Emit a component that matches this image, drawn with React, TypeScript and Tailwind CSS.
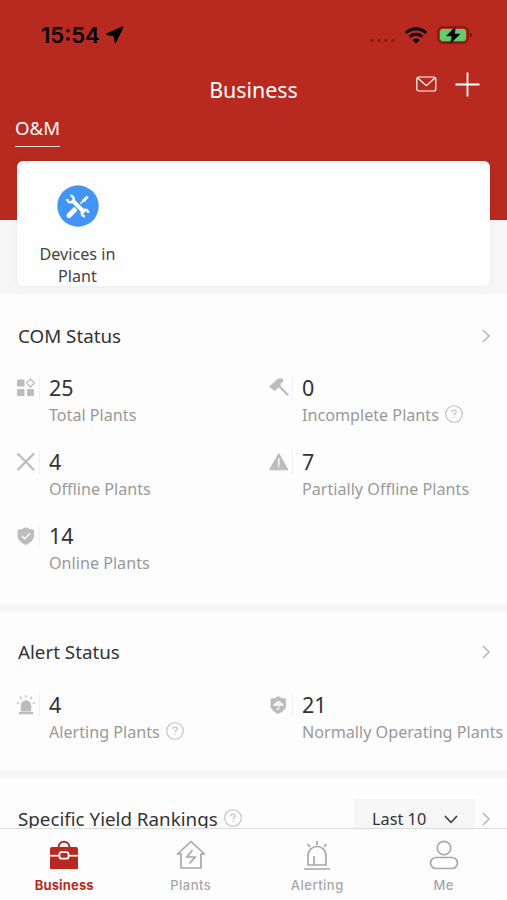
import type { ReactNode } from "react";

function Chevron() {
  return (
    <svg width="8" height="14" viewBox="0 0 8 14" fill="none" stroke="#b0b0b0" strokeWidth="1.4">
      <path d="M1 1l6 6-6 6" />
    </svg>
  );
}

function Help() {
  return (
    <svg className="-mt-0.5" width="18" height="18" viewBox="0 0 18 18" fill="none" stroke="#bdbdbd" strokeWidth="1.1">
      <circle cx="9" cy="9" r="8.3" />
      <path d="M6.9 7.2c0-2.9 4.3-2.8 4.3-.2 0 1.5-2.1 1.6-2.1 3.3M9.1 11.7v1.2" />
    </svg>
  );
}

function GridIcon() {
  return (
    <svg width="20" height="20" viewBox="0 0 20 20" fill="#bcbcbc">
      <rect x="1" y="1.5" width="7.5" height="7" rx="1" />
      <rect x="1" y="11" width="7.5" height="7" rx="1" />
      <rect x="11" y="11" width="7" height="7" rx="1" />
      <path d="M14.5 1l4 4-4 4-4-4z" fill="none" stroke="#bcbcbc" strokeWidth="1.3" strokeLinejoin="round" />
    </svg>
  );
}

function HammerIcon() {
  return (
    <svg width="20" height="20" viewBox="0 0 20 20">
      <path d="M.6 8.8L8.5 1.4Q10.5.2 13.6 1.2l.4 2-2.4 1.5-.6 2.8-5.200 5z" fill="#bcbcbc" stroke="#bcbcbc" strokeWidth="1" strokeLinejoin="round" />
      <path d="M10 8l8.600 8.800" stroke="#bcbcbc" strokeWidth="2.200" strokeLinecap="round" />
    </svg>
  );
}

function CrossIcon() {
  return (
    <svg width="20" height="20" viewBox="0 0 20 20" stroke="#bcbcbc" strokeWidth="2.3" strokeLinecap="round">
      <path d="M2 2l15.500 15.500M17.500 2L2 17.500" />
    </svg>
  );
}

function WarnIcon() {
  return (
    <svg width="20" height="20" viewBox="0 0 20 20">
      <path d="M9.800 1.500l9.200 16.300H.6z" fill="#bcbcbc" stroke="#bcbcbc" strokeWidth="1" strokeLinejoin="round" />
      <path d="M9.800 6.500v6.500M9.800 13.700v1.600" stroke="#fff" strokeWidth="1.400" />
    </svg>
  );
}

function ShieldCheckIcon() {
  return (
    <svg width="20" height="20" viewBox="0 0 20 20">
      <path d="M9.800 1.300Q13 3.500 18 3.700V10c0 4-3.800 7-8.200 9-4.400-2-8.200-5-8.200-9V3.700Q6.600 3.500 9.800 1.300z" fill="#bcbcbc" />
      <path d="M5.700 9.800l3.100 3 5.300-5.600" fill="none" stroke="#fff" strokeWidth="1.300" />
    </svg>
  );
}

function ShieldCloudIcon() {
  return (
    <svg width="20" height="20" viewBox="0 0 20 20">
      <path d="M9.300 1.200Q12.500 3.300 17 3.700V11c0 3.500-3.700 6-7.700 8-4-2-7.700-4.500-7.700-8V3.700Q6 3.300 9.300 1.200z" fill="#bcbcbc" />
      <path d="M4.300 11c0-2.100 1.300-3 2.300-3 .4-2.300 4.900-2.700 5.600 0 1.600 0 2.500 1.200 2.500 3z" fill="#f4f4f4" />
      <path d="M9.800 11v2.500c0 1.600-2.200 1.400-2.200.2" fill="none" stroke="#f4f4f4" strokeWidth="1.200" />
    </svg>
  );
}

function SirenIcon() {
  return (
    <svg width="20" height="20" viewBox="0 0 20 20">
      <path d="M4.800 16.500V10.500a5.200 5.200 0 0 1 10.400 0v6zM3 17h14v2.300H3z" fill="#bcbcbc" />
      <path d="M10 .3v2.500M4 1.700l1.600 2.400M16 1.700l-1.600 2.400M.7 7.500l2.700 1M19.300 7.500l-2.700 1" stroke="#bcbcbc" strokeWidth="1.300" />
    </svg>
  );
}

type MetricProps = { icon: ReactNode; value: number; label: string; help?: boolean };

function Metric({ icon, value, label, help }: MetricProps) {
  return (
    <div className="flex h-[74px] pl-4">
      <div className="flex h-6 w-6 shrink-0 items-center border-r border-[#f0f0f0]">{icon}</div>
      <div className="ml-[9px] whitespace-nowrap">
        <div className="h-6 text-[21.5px] leading-[23px] text-[#333]">{value}</div>
        <div className="mt-[3px] flex h-6 items-center gap-[6px] text-[16.15px] leading-6 text-[#999]">
          {label}
          {help && <Help />}
        </div>
      </div>
    </div>
  );
}

function SectionTitle({ children }: { children: string }) {
  return (
    <div className="flex h-6 items-center justify-between pl-[18px] pr-[17px]">
      <h2 className="text-[18.8px] leading-6 text-[#333]">{children}</h2>
      <Chevron />
    </div>
  );
}

function StatusBar() {
  return (
    <div className="flex h-[70px] items-center justify-between pl-[41px] pr-[34px] text-black">
      <div className="flex items-center gap-[6px] font-['Inter'] text-[22px] font-semibold">
        <span className="w-[59px]">15:54</span>
        <svg width="18" height="18" viewBox="0 0 18 18">
          <path d="M16.800 1L9.400 16.200 8.500 9.600 1 8.300z" stroke="#000" strokeWidth="1.600" strokeLinejoin="round" />
        </svg>
      </div>
      <div className="flex items-center">
        <svg className="mt-[10px] mr-2" width="28" height="5" viewBox="0 0 28 5" fill="#8c1b14">
          <circle cx="3" cy="2.500" r="1.700" />
          <circle cx="10" cy="2.500" r="1.700" />
          <circle cx="17" cy="2.500" r="1.700" />
          <circle cx="24" cy="2.500" r="1.700" />
        </svg>
        <svg className="mr-px" width="22" height="17" viewBox="0 0 22 17" fill="none" stroke="#000" strokeWidth="3">
          <path d="M1 6a14 14 0 0 1 20 0M4.700 9.800a9 9 0 0 1 12.600 0" />
          <path d="M7.500 13a5 5 0 0 1 7 0L11 16.500z" fill="#000" stroke="none" />
        </svg>
        <svg className="ml-[9px]" width="36" height="20" viewBox="0 0 36 20">
          <rect x="1" y="2" width="30" height="16" rx="5" fill="none" stroke="#77170f" strokeWidth="1.500" />
          <rect x="3" y="4" width="26" height="12" rx="3" fill="#62cc70" />
          <path d="M33 7.500q2 .7 2 2.500t-2 2.500z" fill="#77170f" />
          <path d="M18.500 1.500L9.500 11h5.500l-1.500 7.500L23 9h-5.500z" fill="#000" stroke="#2a2a10" strokeWidth=".7" />
        </svg>
      </div>
    </div>
  );
}

function Tab({ label, active, children }: { label: string; active?: boolean; children: ReactNode }) {
  return (
    <div className={active ? "flex flex-1 flex-col items-center text-[#b82a20]" : "flex flex-1 flex-col items-center text-[#a7a7a7]"}>
      <svg width="32" height="32" viewBox="0 0 32 32" fill="none" stroke="currentColor" strokeWidth="1.700">
        {children}
      </svg>
      <span className={active ? "mt-[5px] text-[13px] leading-4 font-bold tracking-[.15px]" : "mt-[5px] text-[13px] leading-4 font-medium tracking-[.5px]"}>
        {label}
      </span>
    </div>
  );
}

function TabBar() {
  return (
    <nav className="flex h-[72px] shrink-0 border-t border-[#dcdcdc] bg-[#fdfdfd] pt-[11px] pl-px font-['Inter']">
      <Tab label="Business" active>
        <path d="M10.500 8c0-8.500 11-8.500 11 0" strokeWidth="2" />
        <path d="M4 7h24q2 0 2 2v19q0 1-1 1H3q-1 0-1-1V9q0-2 2-2z" fill="currentColor" stroke="none" />
        <path d="M2 15.700h28" stroke="#fff" />
        <rect x="11.500" y="12.200" width="9" height="6.500" rx="2" fill="#b82a20" stroke="#fff" />
      </Tab>
      <Tab label="Plants">
        <path d="M6 14H2.500L16 1.500 29.500 14H26v14H6z" strokeLinejoin="round" />
        <path d="M17.500 10L12 17h8l-5.500 6.500" />
      </Tab>
      <Tab label="Alerting">
        <path d="M7 25V15.500a9 9 0 0 1 18 0V25zM3 29h26M13 25V16M16 1v4M6.500 4l2.500 3M25.500 4L23 7" />
      </Tab>
      <Tab label="Me">
        <circle cx="16" cy="8" r="6.700" />
        <rect x="2.500" y="17.500" width="27" height="11" rx="5.500" />
      </Tab>
    </nav>
  );
}

export default function App() {
  return (
    <div className="flex h-[900px] w-[507px] flex-col overflow-hidden bg-[#fdfdfd] font-['Noto_Sans',sans-serif]">
      <main className="min-h-0 flex-1 overflow-hidden">
        <header className="h-[294px] bg-[linear-gradient(#b82a20_220px,#f6f6f6_220px)] text-white">
          <StatusBar />
          <div className="grid h-10 grid-cols-[1fr_auto_1fr] items-center">
            <h1 className="col-start-2 text-[21.4px] leading-7">Business</h1>
            <div className="mb-3 flex items-center justify-end gap-[18px] pr-[27px]">
              <svg width="21" height="16" viewBox="0 0 21 16" fill="none" stroke="#fff" strokeWidth="1.200">
                <rect x=".8" y="1" width="19" height="14" rx="2" />
                <path d="M1.500 1.800l8.800 8 8.800-8" />
              </svg>
              <svg width="25" height="25" viewBox="0 0 25 25" stroke="#fff" strokeWidth="1.800">
                <path d="M12.500.5v24M.5 12.500h24" />
              </svg>
            </div>
          </div>
          <div className="ml-[15px] flex h-[37px] w-[45px] border-b-[1.5px] border-[#ffdedb] pt-[6px] text-[18.6px] leading-6">O&amp;M</div>
          <div className="mx-[17px] mt-[14px] h-[125px] rounded-md bg-[#fefefe] pt-6 shadow-[0_0_6px_rgba(0,0,0,0.05)]">
            <div className="flex w-[121px] flex-col items-center">
              <svg width="42" height="42" viewBox="0 0 42 42">
                <circle cx="21" cy="21" r="20.700" fill="#4294f5" />
                <path d="M12 30.500l6-6" stroke="#fff" strokeWidth="5" strokeLinecap="round" />
                <path d="M22.500 19.500l4-4" stroke="#fff" strokeWidth="1.600" />
                <path d="M25.500 15l4.500-4 1.200 1.200-4 4.800z" fill="#fff" stroke="#fff" strokeLinejoin="round" />
                <path d="M15 15l13 13" stroke="#4294f5" strokeWidth="6.500" />
                <path d="M15 15l12.500 12.500" stroke="#fff" strokeWidth="4" />
                <path d="M13.500 10.800a3.300 3.300 0 1 1-3.300 3.300M28 31.300a3.300 3.300 0 1 1 3.300-3.300" fill="none" stroke="#fff" strokeWidth="2.400" />
              </svg>
              <p className="mt-4 text-center text-[16.2px] leading-[22px] text-[#444]">
                Devices in
                <br />
                Plant
              </p>
            </div>
          </div>
        </header>
        <section className="h-[310px] pt-[29.5px]">
          <SectionTitle>COM Status</SectionTitle>
          <div className="mt-[28.5px] grid grid-cols-[253px_254px]">
            <Metric icon={<GridIcon />} value={25} label="Total Plants" />
            <Metric icon={<HammerIcon />} value={0} label="Incomplete Plants" help />
            <Metric icon={<CrossIcon />} value={4} label="Offline Plants" />
            <Metric icon={<WarnIcon />} value={7} label="Partially Offline Plants" />
            <Metric icon={<ShieldCheckIcon />} value={14} label="Online Plants" />
          </div>
        </section>
        <div className="h-2 bg-[#f6f6f6]" />
        <section className="h-[158px] pt-[28px]">
          <SectionTitle>Alert Status</SectionTitle>
          <div className="mt-[29px] grid grid-cols-[253px_254px]">
            <Metric icon={<SirenIcon />} value={4} label="Alerting Plants" help />
            <Metric icon={<ShieldCloudIcon />} value={21} label="Normally Operating Plants" />
          </div>
        </section>
        <div className="h-2 bg-[#f6f6f6]" />
        <section className="flex pt-[21px] pr-[17px] pl-[18px]">
          <div className="flex h-10 flex-1 items-center gap-[6px] text-[18.8px] leading-6 text-[#333]">
            Specific Yield Rankings
            <Help />
          </div>
          <div className="mr-[7px] flex h-10 w-[121px] items-center justify-between bg-[#f6f6f6] pr-[17px] pl-[18px] text-[16.3px] text-[#333]">
            Last 10
            <svg width="14" height="9" viewBox="0 0 14 9" fill="none" stroke="#333" strokeWidth="1.500">
              <path d="M1 1l6 6.500L13 1" />
            </svg>
          </div>
          <div className="flex h-10 items-center">
            <Chevron />
          </div>
        </section>
      </main>
      <TabBar />
    </div>
  );
}
